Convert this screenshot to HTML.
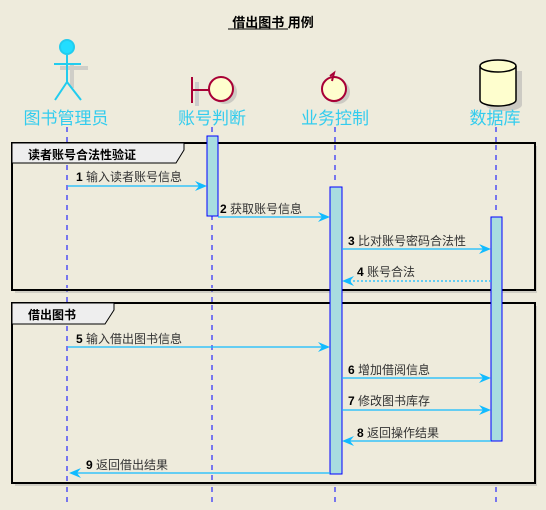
<!DOCTYPE html>
<html><head><meta charset="utf-8"><style>
html,body{margin:0;padding:0;background:#EEEBDC;}
svg{display:block;font-family:"Liberation Sans","Noto Sans CJK SC",sans-serif;}
</style></head><body>
<svg width="546" height="510" viewBox="0 0 546 510" xmlns="http://www.w3.org/2000/svg">
<rect width="546" height="510" fill="#EEEBDC"/>
<text x="273" y="27" text-anchor="middle" font-size="13" font-weight="bold" fill="#000">借出图书 用例</text>
<line x1="228" y1="29" x2="288" y2="29" stroke="#000" stroke-width="1"/>
<!-- lifelines -->
<g stroke="#0000FF" stroke-dasharray="5,5" stroke-width="1">
<line x1="67" y1="127" x2="67" y2="505"/>
<line x1="212" y1="127" x2="212" y2="505"/>
<line x1="335" y1="127" x2="335" y2="505"/>
<line x1="496" y1="127" x2="496" y2="505"/>
</g>
<!-- actor -->
<g stroke="#BBB" stroke-width="4" opacity="0.6" fill="none"><line x1="60" y1="68" x2="88" y2="68"/><line x1="72" y1="64" x2="72" y2="88"/></g>
<g stroke="#22CCEE" stroke-width="2" fill="none">
<circle cx="67" cy="47" r="7" fill="#22DDFF"/>
<line x1="67" y1="55" x2="67" y2="82"/><line x1="54" y1="64" x2="81" y2="64"/>
<line x1="67" y1="82" x2="55" y2="100"/><line x1="67" y1="82" x2="81" y2="100"/>
</g>
<!-- boundary -->
<line x1="197" y1="82" x2="197" y2="106" stroke="#ccc" stroke-width="4"/>
<circle cx="225" cy="92" r="12" fill="#aaa" opacity="0.5"/>
<g stroke="#A80036" stroke-width="2" fill="#FEFECE">
<line x1="192" y1="77" x2="192" y2="103"/><line x1="192" y1="90" x2="209" y2="90"/>
<circle cx="221" cy="89" r="12"/>
</g>
<!-- control -->
<circle cx="338" cy="92" r="12" fill="#aaa" opacity="0.5"/>
<g stroke="#A80036" stroke-width="2" fill="#FEFECE">
<circle cx="334" cy="89" r="12"/>
<polyline points="330,76 334,73 332,81" fill="none"/>
</g>
<!-- database -->
<g>
<path d="M483 68 v34 a18 6 0 0 0 36 0 v-34" fill="#aaa" opacity="0.5" transform="translate(3,3)"/>
<path d="M480 66 v34 a18 6 0 0 0 36 0 v-34 a18 6 0 0 0 -36 0 z" fill="#FEFECE" stroke="#000" stroke-width="1.5"/>
<path d="M480 66 a18 6 0 0 0 36 0" fill="none" stroke="#000" stroke-width="1.5"/>
</g>
<g font-size="17" fill="#33CCEE" text-anchor="middle">
<text x="66" y="124">图书管理员</text>
<text x="212" y="124">账号判断</text>
<text x="335" y="124">业务控制</text>
<text x="495" y="124">数据库</text>
</g>
<!-- group 1 -->
<rect x="15" y="146" width="522" height="147" fill="#999" opacity="0.35"/>
<rect x="12" y="143" width="523" height="147" fill="#EEEBDC" stroke="#000" stroke-width="2"/>
<path d="M12 143 H184 V150 L176 163 H12 Z" fill="#EEEEEE" stroke="#000" stroke-width="1"/>
<text x="28" y="159" font-size="12" font-weight="bold" fill="#000">读者账号合法性验证</text>
<!-- group 2 -->
<rect x="15" y="306" width="522" height="180" fill="#999" opacity="0.35"/>
<rect x="12" y="303" width="523" height="180" fill="#EEEBDC" stroke="#000" stroke-width="2"/>
<path d="M12 303 H114 V310 L105 324 H12 Z" fill="#EEEEEE" stroke="#000" stroke-width="1"/>
<text x="28" y="319" font-size="12" font-weight="bold" fill="#000">借出图书</text>
<!-- lifelines inside groups -->
<g stroke="#0000FF" stroke-dasharray="5,5" stroke-width="1">
<line x1="67" y1="165" x2="67" y2="288"/><line x1="212" y1="145" x2="212" y2="288"/>
<line x1="67" y1="326" x2="67" y2="481"/><line x1="212" y1="305" x2="212" y2="481"/>
<line x1="496" y1="145" x2="496" y2="215"/>
<line x1="335" y1="145" x2="335" y2="185"/>
</g>
<!-- activations -->
<g fill="#A8DDE0" stroke="#0000FF" stroke-width="1">
<rect x="207" y="136" width="11" height="80"/>
<rect x="330" y="187" width="12" height="287"/>
<rect x="491" y="217" width="11" height="224"/>
</g>
<!-- messages -->
<g stroke="#11BBFF" stroke-width="1.2" fill="none">
<line x1="68" y1="186" x2="205" y2="186"/>
<line x1="218" y1="217" x2="328" y2="217"/>
<line x1="342" y1="249" x2="489" y2="249"/>
<line x1="491" y1="281" x2="344" y2="281" stroke-dasharray="2,2"/>
<line x1="68" y1="347" x2="328" y2="347"/>
<line x1="342" y1="378" x2="489" y2="378"/>
<line x1="342" y1="410" x2="489" y2="410"/>
<line x1="491" y1="441" x2="344" y2="441"/>
<line x1="330" y1="473" x2="71" y2="473"/>
</g>
<g fill="#11BBFF">
<path d="M207 186 l-12 -5 l4 5 l-4 5z"/>
<path d="M330 217 l-12 -5 l4 5 l-4 5z"/>
<path d="M491 249 l-12 -5 l4 5 l-4 5z"/>
<path d="M342 281 l12 -5 l-4 5 l4 5z"/>
<path d="M330 347 l-12 -5 l4 5 l-4 5z"/>
<path d="M491 378 l-12 -5 l4 5 l-4 5z"/>
<path d="M491 410 l-12 -5 l4 5 l-4 5z"/>
<path d="M342 441 l12 -5 l-4 5 l4 5z"/>
<path d="M69 473 l12 -5 l-4 5 l4 5z"/>
</g>
<g font-size="12" fill="#333">
<text x="76" y="181"><tspan font-weight="bold" fill="#000">1</tspan> 输入读者账号信息</text>
<text x="220" y="213"><tspan font-weight="bold" fill="#000">2</tspan> 获取账号信息</text>
<text x="348" y="245"><tspan font-weight="bold" fill="#000">3</tspan> 比对账号密码合法性</text>
<text x="357" y="276"><tspan font-weight="bold" fill="#000">4</tspan> 账号合法</text>
<text x="76" y="343"><tspan font-weight="bold" fill="#000">5</tspan> 输入借出图书信息</text>
<text x="348" y="374"><tspan font-weight="bold" fill="#000">6</tspan> 增加借阅信息</text>
<text x="348" y="405"><tspan font-weight="bold" fill="#000">7</tspan> 修改图书库存</text>
<text x="357" y="437"><tspan font-weight="bold" fill="#000">8</tspan> 返回操作结果</text>
<text x="86" y="469"><tspan font-weight="bold" fill="#000">9</tspan> 返回借出结果</text>
</g>
</svg>
</body></html>
